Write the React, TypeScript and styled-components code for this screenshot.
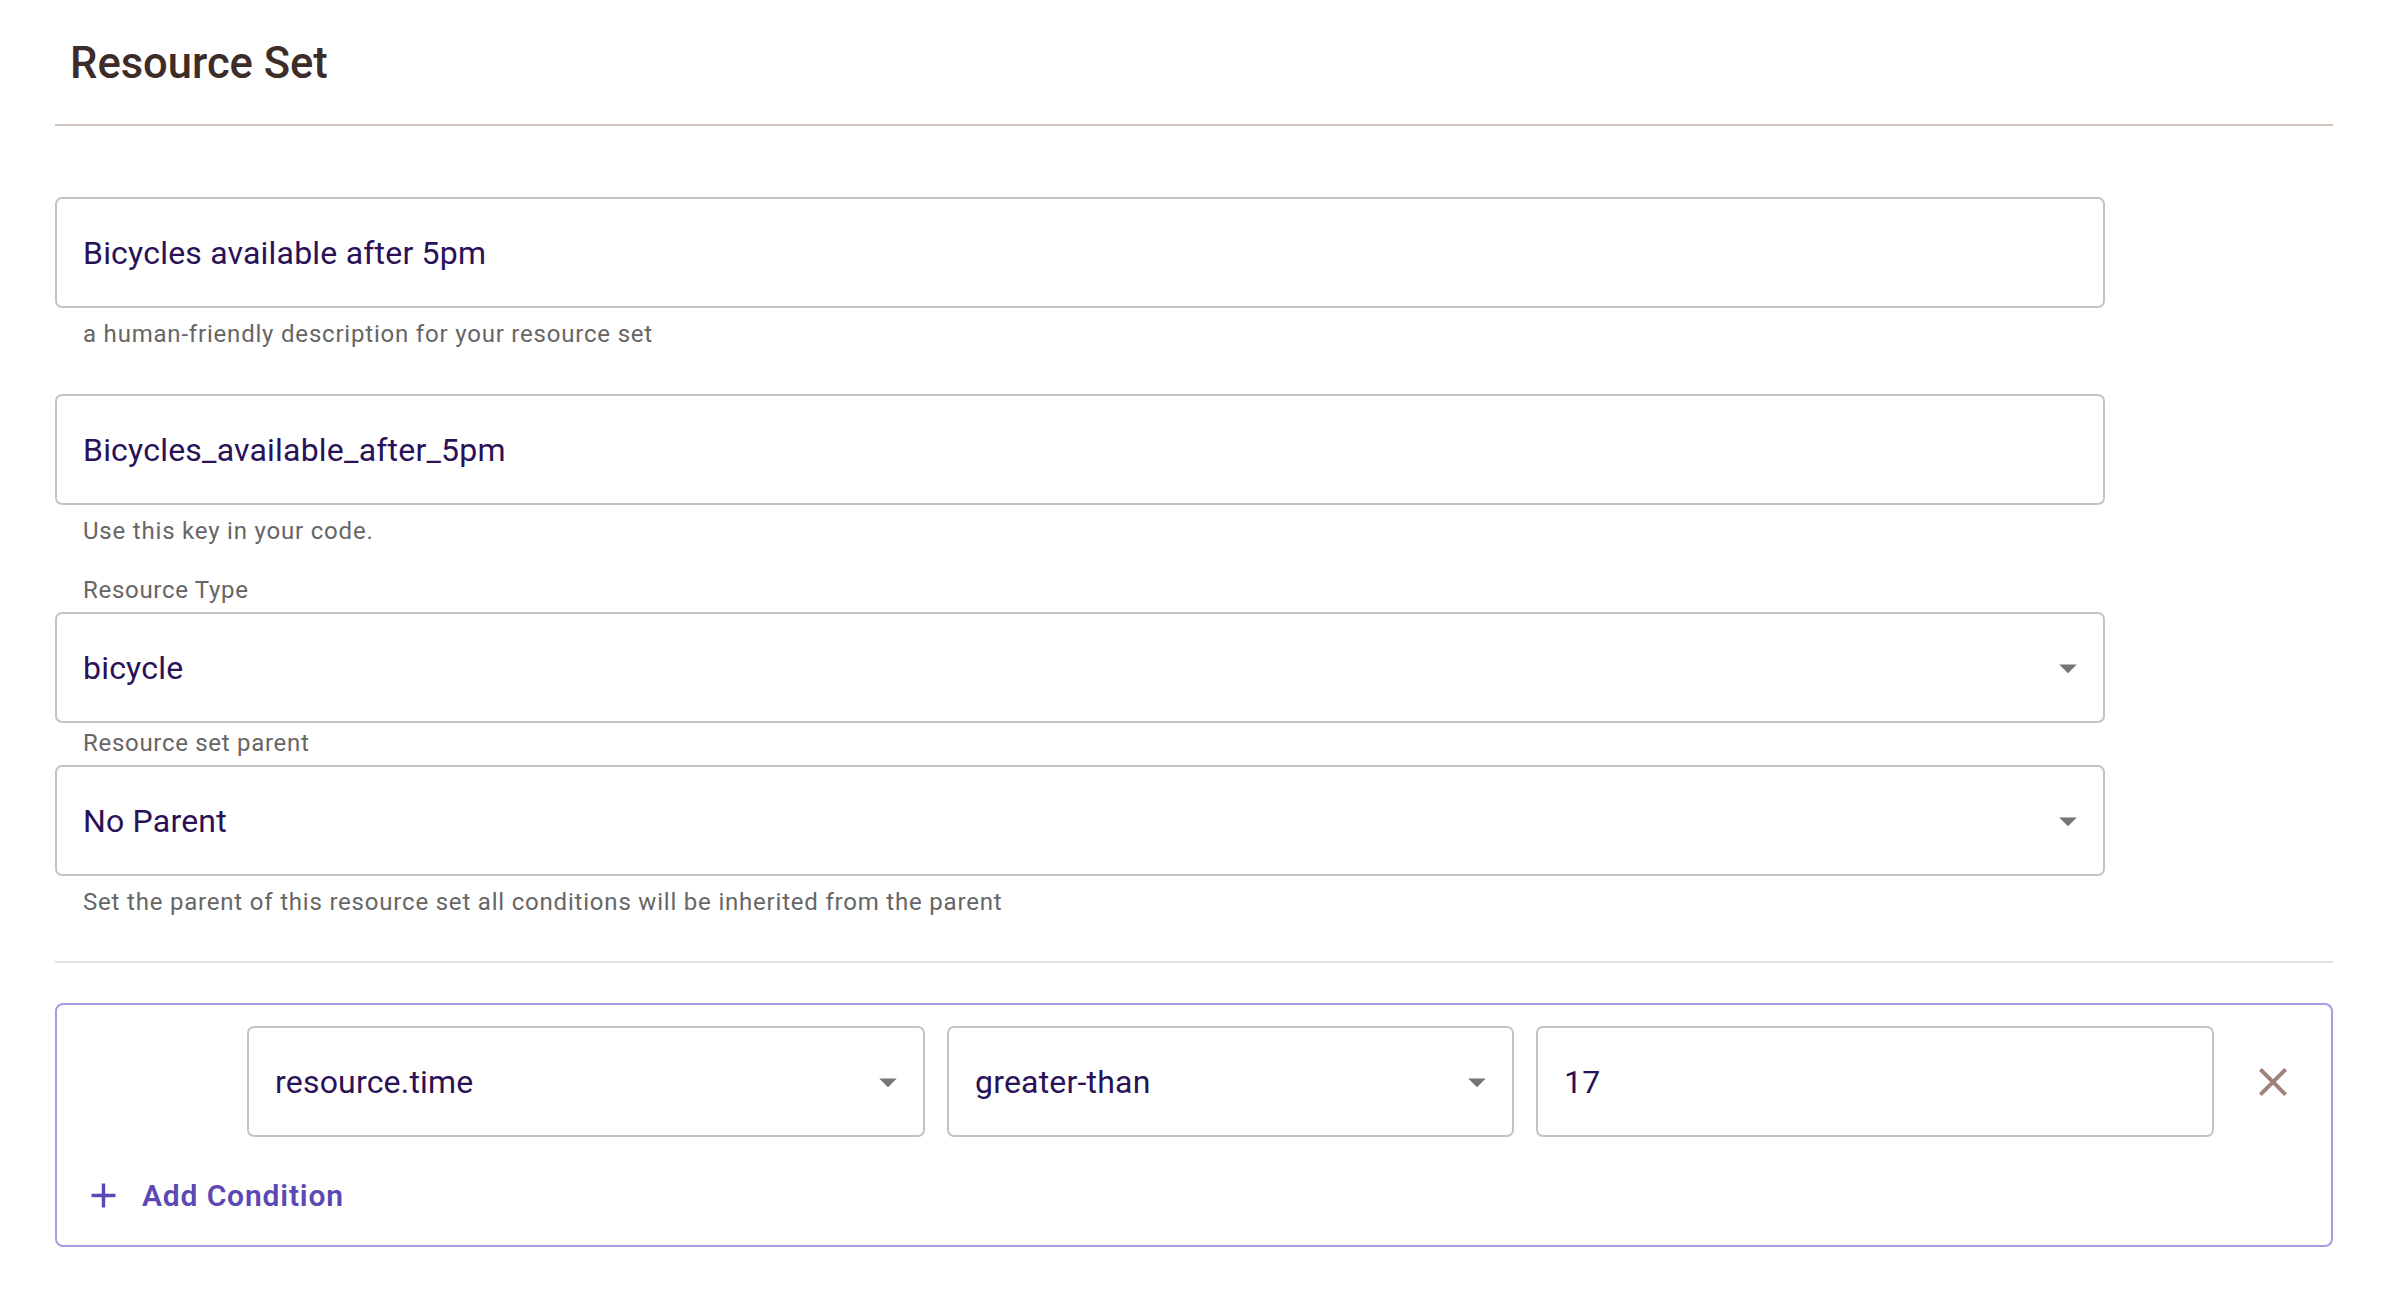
import React from "react";
import styled, { createGlobalStyle } from "styled-components";

const GlobalStyle = createGlobalStyle`
  body {
    margin: 0;
    background: #ffffff;
    font-family: Roboto, "Liberation Sans", sans-serif;
  }
`;

const Page = styled.div`
  padding: 0 55px 40px 55px;
  font-family: Roboto, "Liberation Sans", sans-serif;
`;

const Title = styled.h1`
  margin: 39px 0 0;
  padding-left: 15px;
  font-size: 43.5px;
  line-height: 50px;
  font-weight: 500;
  color: #3d2c28;
`;

const Rule = styled.hr<{ $color: string; $top: number }>`
  margin: ${(p) => p.$top}px 0 0;
  border: none;
  height: 2px;
  background: ${(p) => p.$color};
`;

const Form = styled.div`
  width: 2050px;
  margin-top: 71px;
`;

const Field = styled.div<{ $top: number }>`
  margin-top: ${(p) => p.$top}px;
`;

const Label = styled.div`
  padding-left: 28px;
  margin-bottom: 7px;
  font-size: 24px;
  line-height: 30px;
  letter-spacing: 0.7px;
  color: #666666;
`;

const Box = styled.div`
  box-sizing: border-box;
  height: 111px;
  display: flex;
  align-items: center;
  justify-content: space-between;
  padding: 0 14px 0 26px;
  border: 2px solid #c4c4c4;
  border-radius: 7px;
  background: #ffffff;
`;

const Value = styled.span`
  font-size: 32px;
  color: #2a1158;
  letter-spacing: 0.2px;
`;

const Helper = styled.div`
  margin-top: 11px;
  padding-left: 28px;
  font-size: 24px;
  line-height: 30px;
  letter-spacing: 0.8px;
  color: #666666;
`;

const Conditions = styled.div`
  margin-top: 40px;
  border: 2px solid #a99be3;
  border-radius: 8px;
  padding: 21px 0 23px;
`;

const ConditionRow = styled.div`
  display: grid;
  grid-template-columns: 168px 678px 567px 678px 1fr;
  column-gap: 22px;
  align-items: center;
`;

const RemoveButton = styled.button`
  justify-self: center;
  margin-left: -22px;
  display: flex;
  align-items: center;
  justify-content: center;
  background: none;
  border: none;
  padding: 0;
  cursor: pointer;
  color: #a08378;
`;

const AddButton = styled.button`
  margin: 31px 0 0 26px;
  height: 54px;
  display: flex;
  align-items: center;
  gap: 18px;
  background: none;
  border: none;
  padding: 0;
  cursor: pointer;
  font-family: Roboto, "Liberation Sans", sans-serif;
  font-size: 30px;
  font-weight: 600;
  letter-spacing: 0.85px;
  color: #5b48b5;
`;

const Arrow = () => (
  <svg width="42" height="42" viewBox="0 0 24 24" fill="#757575">
    <path d="M7 10l5 5 5-5z" />
  </svg>
);

const Input = ({ value }: { value: string }) => (
  <Box>
    <Value>{value}</Value>
  </Box>
);

const Select = ({ value }: { value: string }) => (
  <Box>
    <Value>{value}</Value>
    <Arrow />
  </Box>
);

export default function App() {
  return (
    <Page>
      <GlobalStyle />
      <Title>Resource Set</Title>
      <Rule $color="#d3c4bc" $top={35} />
      <Form>
        <Field $top={0}>
          <Input value="Bicycles available after 5pm" />
          <Helper>a human-friendly description for your resource set</Helper>
        </Field>
        <Field $top={45}>
          <Input value="Bicycles_available_after_5pm" />
          <Helper>Use this key in your code.</Helper>
        </Field>
        <Field $top={29}>
          <Label>Resource Type</Label>
          <Select value="bicycle" />
        </Field>
        <Field $top={5}>
          <Label>Resource set parent</Label>
          <Select value="No Parent" />
          <Helper>
            Set the parent of this resource set all conditions will be inherited from the parent
          </Helper>
        </Field>
      </Form>
      <Rule $color="#e2e2e2" $top={44} />
      <Conditions>
        <ConditionRow>
          <div />
          <Select value="resource.time" />
          <Select value="greater-than" />
          <Input value="17" />
          <RemoveButton aria-label="remove condition">
            <svg width="48" height="48" viewBox="0 0 24 24" fill="currentColor">
              <path d="M19 6.41 17.59 5 12 10.59 6.41 5 5 6.41 10.59 12 5 17.59 6.41 19 12 13.41 17.59 19 19 17.59 13.41 12z" />
            </svg>
          </RemoveButton>
        </ConditionRow>
        <AddButton>
          <svg width="41" height="41" viewBox="0 0 24 24" fill="currentColor">
            <path d="M19 13h-6v6h-2v-6H5v-2h6V5h2v6h6v2z" />
          </svg>
          Add Condition
        </AddButton>
      </Conditions>
    </Page>
  );
}
